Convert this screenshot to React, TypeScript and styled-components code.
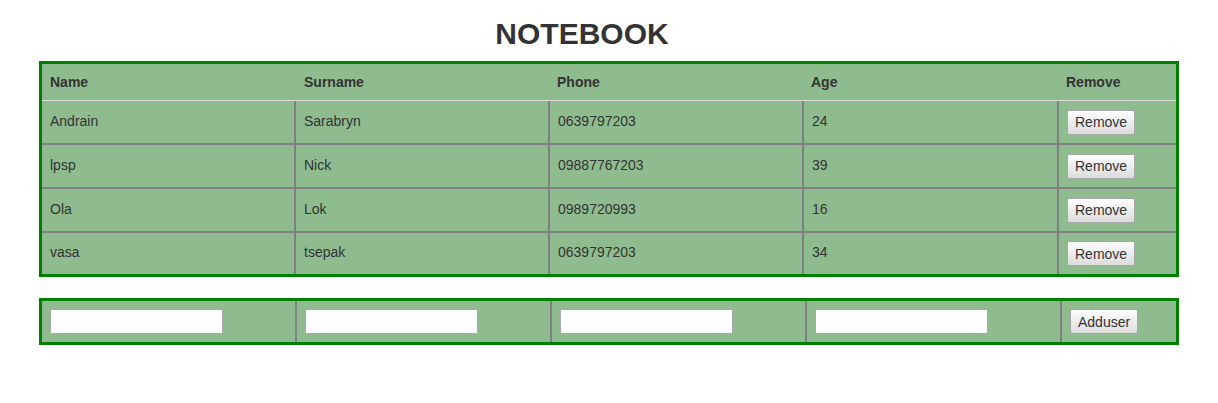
import React from "react";
import styled, { createGlobalStyle } from "styled-components";

const GlobalStyle = createGlobalStyle`
  html, body { margin: 0; padding: 0; background: #fff; }
  body {
    font-family: "Liberation Sans", Arial, sans-serif;
    font-size: 14px;
    color: #333;
  }
`;

const Page = styled.div`
  width: 1140px;
  margin: 0 auto;
  padding-top: 17px;
`;

const Title = styled.h1`
  margin: 0 54px 10px 0;
  font-size: 30px;
  line-height: 34px;
  font-weight: bold;
  text-align: center;
  color: #333;
`;

const Board = styled.div<{ $gap?: number }>`
  border: 3px solid #008000;
  background: #8fbc8f;
  margin-bottom: ${(p) => p.$gap ?? 0}px;
`;

const HeadRow = styled.div<{ $cols: string }>`
  display: grid;
  grid-template-columns: ${(p) => p.$cols};
  height: 36px;
  border-bottom: 1px solid #dddddd;
`;

const Body = styled.div``;

const Row = styled.div<{ $cols: string; $h: number }>`
  display: grid;
  grid-template-columns: ${(p) => p.$cols};
  height: ${(p) => p.$h}px;
  box-sizing: content-box;
  &:not(:first-child) {
    border-top: 2px solid #808080;
  }
`;

const HeadCell = styled.div`
  display: flex;
  align-items: center;
  padding-left: 8px;
  font-size: 14px;
  font-weight: bold;
  color: #333;
  white-space: nowrap;
  &:not(:first-child) {
    padding-left: 10px;
  }
`;

const Cell = styled.div`
  display: flex;
  align-items: center;
  padding-left: 8px;
  font-size: 14px;
  color: #333;
  white-space: nowrap;
  &:not(:first-child) {
    border-left: 2px solid #808080;
  }
`;

const Text = styled.span`
  margin-bottom: 3px;
`;

const Button = styled.button`
  box-sizing: border-box;
  height: 25px;
  padding: 0 7px;
  border: 1px solid #a6a6a6;
  border-radius: 2px;
  background: linear-gradient(#fefefe, #dcdcdc);
  font-family: "Liberation Sans", Arial, sans-serif;
  font-size: 14px;
  color: #333;
  cursor: pointer;
`;

const Field = styled.input`
  box-sizing: border-box;
  width: 173px;
  height: 25px;
  border: 1px solid #a9a9a9;
  background: #fff;
  padding: 0 3px;
  font-family: "Liberation Sans", Arial, sans-serif;
  font-size: 14px;
  outline: none;
`;

const headCols = "252px 253px 254px 255px 120px";
const listCols = "252px 254px 254px 255px 119px";
const formCols = "253px 255px 255px 255px 116px";

const people = [
  { name: "Andrain", surname: "Sarabryn", phone: "0639797203", age: 24 },
  { name: "lpsp", surname: "Nick", phone: "09887767203", age: 39 },
  { name: "Ola", surname: "Lok", phone: "0989720993", age: 16 },
  { name: "vasa", surname: "tsepak", phone: "0639797203", age: 34 },
];

export default function App() {
  return (
    <>
      <GlobalStyle />
      <Page>
        <Title>NOTEBOOK</Title>
        <Board $gap={21}>
          <HeadRow $cols={headCols}>
            <HeadCell>Name</HeadCell>
            <HeadCell>Surname</HeadCell>
            <HeadCell>Phone</HeadCell>
            <HeadCell>Age</HeadCell>
            <HeadCell>Remove</HeadCell>
          </HeadRow>
          <Body>
            {people.map((p, i) => (
              <Row
                key={i}
                $cols={listCols}
                $h={i === people.length - 1 ? 41 : 42}
              >
                <Cell>
                  <Text>{p.name}</Text>
                </Cell>
                <Cell>
                  <Text>{p.surname}</Text>
                </Cell>
                <Cell>
                  <Text>{p.phone}</Text>
                </Cell>
                <Cell>
                  <Text>{p.age}</Text>
                </Cell>
                <Cell>
                  <Button>Remove</Button>
                </Cell>
              </Row>
            ))}
          </Body>
        </Board>
        <Board>
          <Row $cols={formCols} $h={41}>
            <Cell>
              <Field />
            </Cell>
            <Cell>
              <Field />
            </Cell>
            <Cell>
              <Field />
            </Cell>
            <Cell>
              <Field />
            </Cell>
            <Cell>
              <Button>Adduser</Button>
            </Cell>
          </Row>
        </Board>
      </Page>
    </>
  );
}
